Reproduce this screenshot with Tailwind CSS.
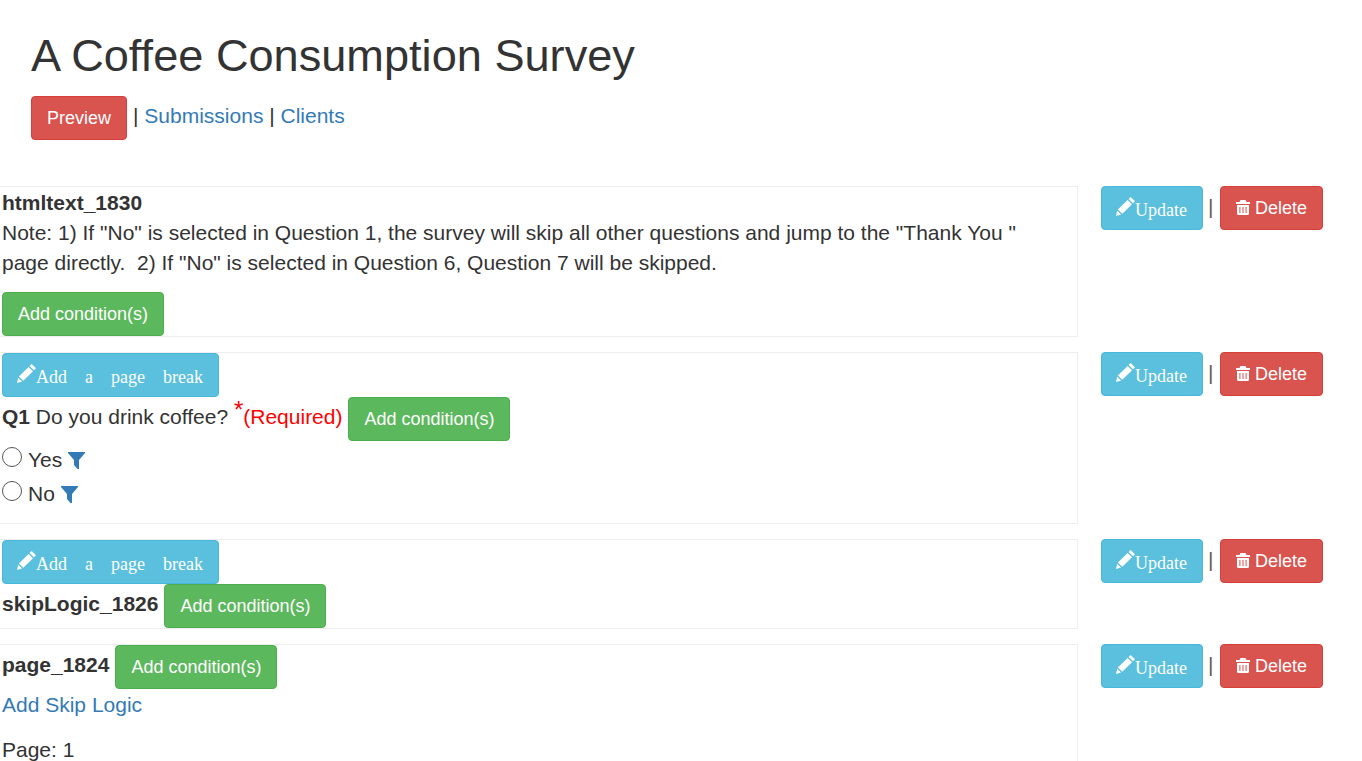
<!DOCTYPE html>
<html>
<head>
<meta charset="utf-8">
<script src="https://cdn.jsdelivr.net/npm/@tailwindcss/browser@4"></script>
</head>
<body class="h-[761px] overflow-hidden bg-white font-['Liberation_Sans',sans-serif] text-[21px] leading-[30px] text-[#333]">
<header class="pl-[31px] pt-[32px] h-[186px]">
  <h1 class="text-[45.15px] leading-[48px] font-normal m-0">A Coffee Consumption Survey</h1>
  <div class="mt-[16px] flex items-start">
    <a class="inline-block h-[44px] px-[15px] rounded-[4px] border border-[#d43f3a] bg-[#d9534f] text-white text-[18px] leading-[42px]">Preview</a>
    <span class="ml-[6px] mt-[5px] whitespace-pre">| <a class="text-[#337ab7]">Submissions</a> | <a class="text-[#337ab7]">Clients</a></span>
  </div>
</header>

<main class="flex flex-col gap-[15px]">
  <section class="flex items-start">
    <div class="w-[1078px] h-[151px] border border-[#eee] pl-[2px] pt-[1px] border-l-0">
      <div class="font-bold">htmltext_1830</div>
      <p class="w-[1040px]">Note: 1) If "No" is selected in Question 1, the survey will skip all other questions and jump to the "Thank You " page directly.&nbsp; 2) If "No" is selected in Question 6, Question 7 will be skipped.</p>
      <a class="mt-[14px] inline-block w-[162px] h-[44px] text-center rounded-[4px] border border-[#4cae4c] bg-[#5cb85c] text-white text-[18px] leading-[42px]">Add condition(s)</a>
    </div>
    <div class="ml-[23px] flex items-start">
      <a class="flex items-center h-[44px] pl-[14px] pr-[15px] rounded-[4px] border border-[#46b8da] bg-[#5bc0de] text-white font-['Liberation_Serif',serif] text-[18px]"><svg width="19" height="19" viewBox="0 0 19 19" class="-mt-[4px]" fill="white"><path d="M14.6 0 19 4.200 17 6.200 12.600 2zM11.600 3 16 7.200 6.300 16.800 1.900 12.600zM1.200 13.800 5.100 17.600 0 19z"/></svg><span class="mt-[4px]">Update</span></a>
      <span class="ml-[5px] w-[12px] -mt-[1px] leading-[44px] text-[#6b5a48]">|</span>
      <a class="flex items-center h-[44px] px-[15px] rounded-[4px] border border-[#d43f3a] bg-[#d9534f] text-white text-[18px]"><svg width="14" height="15" viewBox="0 0 14 15" class="mr-[5px] -mt-[2px]" fill="white"><path d="M4.500 0h5l1 2H14v2H0V2h3.500zM1 5h12v8.500a1.500 1.500 0 0 1-1.500 1.500h-9A1.500 1.500 0 0 1 1 13.500zm2.400 2v6h1V7zm3.100 0v6h1V7zm3.100 0v6h1V7z" fill-rule="evenodd"/></svg>Delete</a>
    </div>
  </section>

  <section class="flex items-start">
    <div class="w-[1078px] h-[172px] border border-[#eee] pl-[2px] border-l-0">
      <a class="flex w-[217px] items-center h-[44px] pl-[14px] rounded-[4px] border border-[#46b8da] bg-[#5bc0de] text-white font-['Liberation_Serif',serif] text-[18px] whitespace-pre"><svg width="19" height="19" viewBox="0 0 19 19" class="-mt-[4px]" fill="white"><path d="M14.6 0 19 4.200 17 6.200 12.600 2zM11.600 3 16 7.200 6.300 16.800 1.900 12.600zM1.200 13.800 5.100 17.600 0 19z"/></svg><span class="mt-[4px]">Add&nbsp;&nbsp;&nbsp;&nbsp;a&nbsp;&nbsp;&nbsp;&nbsp;page&nbsp;&nbsp;&nbsp;&nbsp;break</span></a>
      <div class="flex items-start h-[44px]">
        <span class="mt-[5px] whitespace-pre"><b>Q1</b> Do you drink coffee? <span class="text-[#f00]"><span class="relative -top-[6px] text-[24px] leading-none">*</span>(Required)</span></span>
        <a class="ml-[6px] inline-block w-[162px] h-[44px] text-center rounded-[4px] border border-[#4cae4c] bg-[#5cb85c] text-white text-[18px] leading-[42px]">Add condition(s)</a>
      </div>
      <div class="mt-[2px] flex items-center h-[34px]"><span class="w-[20px] h-[20px] -mt-[6px] rounded-full border border-[#555]"></span><span class="ml-[6px]">Yes</span><svg width="17" height="17" viewBox="0 0 17 17" class="ml-[6px]" fill="#337ab7"><path d="M0 0h17v1l-6 7v9H9.500L6 13V8L0 1z"/></svg></div>
      <div class="flex items-center h-[34px]"><span class="w-[20px] h-[20px] -mt-[6px] rounded-full border border-[#555]"></span><span class="ml-[6px]">No</span><svg width="17" height="17" viewBox="0 0 17 17" class="ml-[6px]" fill="#337ab7"><path d="M0 0h17v1l-6 7v9H9.500L6 13V8L0 1z"/></svg></div>
    </div>
    <div class="ml-[23px] flex items-start">
      <a class="flex items-center h-[44px] pl-[14px] pr-[15px] rounded-[4px] border border-[#46b8da] bg-[#5bc0de] text-white font-['Liberation_Serif',serif] text-[18px]"><svg width="19" height="19" viewBox="0 0 19 19" class="-mt-[4px]" fill="white"><path d="M14.6 0 19 4.200 17 6.200 12.600 2zM11.600 3 16 7.200 6.300 16.800 1.900 12.600zM1.200 13.800 5.100 17.600 0 19z"/></svg><span class="mt-[4px]">Update</span></a>
      <span class="ml-[5px] w-[12px] -mt-[1px] leading-[44px] text-[#6b5a48]">|</span>
      <a class="flex items-center h-[44px] px-[15px] rounded-[4px] border border-[#d43f3a] bg-[#d9534f] text-white text-[18px]"><svg width="14" height="15" viewBox="0 0 14 15" class="mr-[5px] -mt-[2px]" fill="white"><path d="M4.500 0h5l1 2H14v2H0V2h3.500zM1 5h12v8.500a1.500 1.500 0 0 1-1.500 1.500h-9A1.500 1.500 0 0 1 1 13.500zm2.400 2v6h1V7zm3.100 0v6h1V7zm3.100 0v6h1V7z" fill-rule="evenodd"/></svg>Delete</a>
    </div>
  </section>

  <section class="flex items-start">
    <div class="w-[1078px] h-[90px] border border-[#eee] pl-[2px] border-l-0">
      <a class="flex w-[217px] items-center h-[44px] pl-[14px] rounded-[4px] border border-[#46b8da] bg-[#5bc0de] text-white font-['Liberation_Serif',serif] text-[18px] whitespace-pre"><svg width="19" height="19" viewBox="0 0 19 19" class="-mt-[4px]" fill="white"><path d="M14.6 0 19 4.200 17 6.200 12.600 2zM11.600 3 16 7.200 6.300 16.800 1.900 12.600zM1.200 13.800 5.100 17.600 0 19z"/></svg><span class="mt-[4px]">Add&nbsp;&nbsp;&nbsp;&nbsp;a&nbsp;&nbsp;&nbsp;&nbsp;page&nbsp;&nbsp;&nbsp;&nbsp;break</span></a>
      <div class="flex items-start">
        <b class="mt-[5px]">skipLogic_1826</b>
        <a class="ml-[6px] inline-block w-[162px] h-[44px] text-center rounded-[4px] border border-[#4cae4c] bg-[#5cb85c] text-white text-[18px] leading-[42px]">Add condition(s)</a>
      </div>
    </div>
    <div class="ml-[23px] flex items-start">
      <a class="flex items-center h-[44px] pl-[14px] pr-[15px] rounded-[4px] border border-[#46b8da] bg-[#5bc0de] text-white font-['Liberation_Serif',serif] text-[18px]"><svg width="19" height="19" viewBox="0 0 19 19" class="-mt-[4px]" fill="white"><path d="M14.6 0 19 4.200 17 6.200 12.600 2zM11.600 3 16 7.200 6.300 16.800 1.900 12.600zM1.200 13.800 5.100 17.600 0 19z"/></svg><span class="mt-[4px]">Update</span></a>
      <span class="ml-[5px] w-[12px] -mt-[1px] leading-[44px] text-[#6b5a48]">|</span>
      <a class="flex items-center h-[44px] px-[15px] rounded-[4px] border border-[#d43f3a] bg-[#d9534f] text-white text-[18px]"><svg width="14" height="15" viewBox="0 0 14 15" class="mr-[5px] -mt-[2px]" fill="white"><path d="M4.500 0h5l1 2H14v2H0V2h3.500zM1 5h12v8.500a1.500 1.500 0 0 1-1.500 1.500h-9A1.500 1.500 0 0 1 1 13.500zm2.400 2v6h1V7zm3.100 0v6h1V7zm3.100 0v6h1V7z" fill-rule="evenodd"/></svg>Delete</a>
    </div>
  </section>

  <section class="flex items-start">
    <div class="w-[1078px] h-[160px] border border-[#eee] pl-[2px] border-l-0">
      <div class="flex items-start">
        <b class="mt-[5px]">page_1824</b>
        <a class="ml-[6px] inline-block w-[162px] h-[44px] text-center rounded-[4px] border border-[#4cae4c] bg-[#5cb85c] text-white text-[18px] leading-[42px]">Add condition(s)</a>
      </div>
      <a class="block mt-[1px] text-[#337ab7]">Add Skip Logic</a>
      <p class="mt-[15px]">Page: 1</p>
    </div>
    <div class="ml-[23px] flex items-start">
      <a class="flex items-center h-[44px] pl-[14px] pr-[15px] rounded-[4px] border border-[#46b8da] bg-[#5bc0de] text-white font-['Liberation_Serif',serif] text-[18px]"><svg width="19" height="19" viewBox="0 0 19 19" class="-mt-[4px]" fill="white"><path d="M14.6 0 19 4.200 17 6.200 12.600 2zM11.600 3 16 7.200 6.300 16.800 1.900 12.600zM1.200 13.800 5.100 17.600 0 19z"/></svg><span class="mt-[4px]">Update</span></a>
      <span class="ml-[5px] w-[12px] -mt-[1px] leading-[44px] text-[#6b5a48]">|</span>
      <a class="flex items-center h-[44px] px-[15px] rounded-[4px] border border-[#d43f3a] bg-[#d9534f] text-white text-[18px]"><svg width="14" height="15" viewBox="0 0 14 15" class="mr-[5px] -mt-[2px]" fill="white"><path d="M4.500 0h5l1 2H14v2H0V2h3.500zM1 5h12v8.500a1.500 1.500 0 0 1-1.500 1.500h-9A1.500 1.500 0 0 1 1 13.500zm2.400 2v6h1V7zm3.100 0v6h1V7zm3.100 0v6h1V7z" fill-rule="evenodd"/></svg>Delete</a>
    </div>
  </section>
</main>
</body>
</html>
